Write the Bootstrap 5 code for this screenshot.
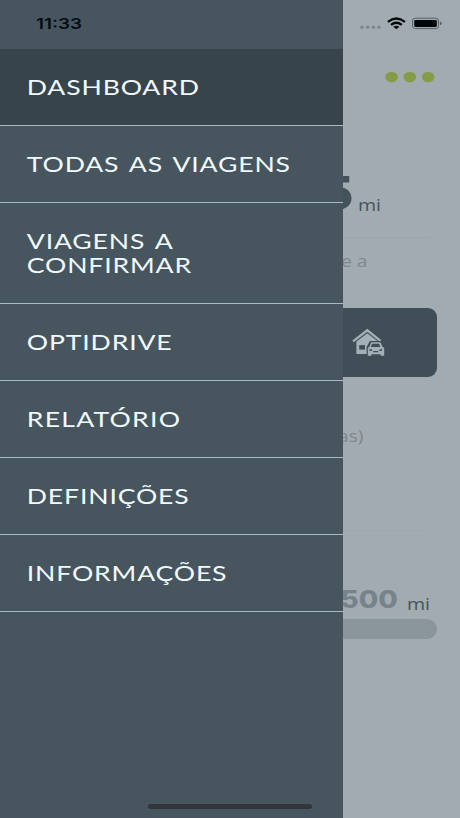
<!DOCTYPE html>
<html lang="pt">
<head>
<meta charset="utf-8">
<meta name="viewport" content="width=device-width, initial-scale=1">
<title>Dashboard</title>
<link rel="stylesheet" href="https://cdn.jsdelivr.net/npm/bootstrap@5.3.0/dist/css/bootstrap.min.css">
<style>
  body { background: #a2abb1; font-family: "Open Sans", sans-serif; color: #485359; }
  .phone { width: 460px; height: 818px; }
  .status { height: 49px; padding: 17px 18px 0 0; }
  .topbar { height: 59px; padding: 22px 25px 0 0; border-bottom: 1px solid #9fa8ae; }
  .hero { height: 130px; margin-right: 29px; padding-right: 50px; border-bottom: 1px solid #9da6ac; }
  .hero-num { font: 800 47px/46px "Inter", sans-serif; color: #44525b; margin-bottom: 21px; margin-right: 7px; transform: scaleX(1.14); transform-origin: right; }
  .unit { font-size: 17px; line-height: 24px; }
  .unit span { display: inline-block; transform: scaleX(1.15); transform-origin: right; }
  .hero .unit { margin-bottom: 20px; }
  .goal .unit { margin-bottom: 3px; }
  .note { font-size: 17px; line-height: 24px; color: #7e888e; }
  .note span { display: inline-block; transform: scaleX(1.12); transform-origin: right; }
  .period { height: 70px; padding: 11px 93px 0 0; }
  .tile { width: 410px; height: 69px; margin-right: 23px; border-radius: 9px; background: #404e57; padding: 19px 52px 0 0; }
  .group { height: 153px; padding: 47px 97px 0 0; }
  .rule { height: 1px; width: 402px; margin-right: 29px; background: #9fa8ae; }
  .goal { height: 88px; padding-right: 30px; }
  .goal-num { font: 800 24px/28px "Inter", sans-serif; color: #77838a; margin-bottom: 5px; margin-right: 12px; transform: scaleX(1.18); transform-origin: right; }
  .meter { width: 410px; height: 20px; margin-right: 23px; border-radius: 10px; background: #8b959c; }
  .drawer { width: 343px; background: #46555e; }
  .clock { height: 49px; padding: 14px 0 0 36px; font: 600 15px/19px "Inter", sans-serif; color: #050d14; }
  .clock span { display: inline-block; transform: scaleX(1.26); transform-origin: left; }
  .entry { min-height: 77px; padding: 26px 0 26px 27px; border-bottom: 1px solid #a9b9c3; color: #f1faff; font: 400 21px/24px "Lato", sans-serif; text-decoration: none; }
  .entry.current { background: #38444c; }
  .entry span { display: block; width: max-content; letter-spacing: .65px; word-spacing: 2.2px; transform: translateX(-.2px) scaleX(1.268); transform-origin: left; }
  .entry .loose { letter-spacing: .95px; }
  .home-bar { left: 148px; top: 804px; width: 164px; height: 5px; border-radius: 3px; background: #34353a; }
</style>
<script src="https://cdn.jsdelivr.net/npm/bootstrap@5.3.0/dist/js/bootstrap.bundle.min.js"></script>
</head>
<body>
<div class="phone position-relative overflow-hidden">
  <main class="d-flex flex-column align-items-end">
    <div class="status w-100 d-flex justify-content-end">
      <svg width="82" height="14" viewBox="0 0 82 14">
        <g fill="#7d868c"><circle cx="2" cy="10.3" r="1.7"/><circle cx="7.7" cy="10.3" r="1.7"/><circle cx="13.4" cy="10.3" r="1.7"/><circle cx="19" cy="10.3" r="1.7"/></g>
        <g fill="none" stroke="#030608" stroke-width="2.3"><path d="M27.9 4.9Q36.3-1.8 44.9 4.9"/><path d="M31 7.9Q36.3 3.6 41.8 7.9"/></g>
        <path d="M33.3 9.8q3-2.2 6.1 0l-3 2.5z" fill="#030608"/>
        <rect x="52.5" y="1.2" width="26" height="10.4" rx="2.8" fill="none" stroke="#596167"/>
        <rect x="54.2" y="2.9" width="22.6" height="7" rx="1.3" fill="#030608"/>
        <path d="M80 4.6q1.8.5 1.8 1.8T80 8.2z" fill="#596167"/>
      </svg>
    </div>
    <div class="topbar w-100 d-flex justify-content-end">
      <svg width="50" height="12" viewBox="0 0 50 12" fill="#859b45"><ellipse cx="6.6" cy="6" rx="6.3" ry="5.2"/><ellipse cx="24.8" cy="6" rx="6.3" ry="5.2"/><ellipse cx="43.2" cy="6" rx="6.3" ry="5.2"/></svg>
    </div>
    <div class="hero d-flex justify-content-end align-items-end">
      <div class="hero-num">5</div><div class="unit"><span>mi</span></div>
    </div>
    <div class="period note"><span>e a</span></div>
    <div class="tile d-flex justify-content-end">
      <svg width="33" height="29" viewBox="0 0 33 29">
        <path d="M1 14.3 15.3 3.3 28.5 13.8" fill="none" stroke="#a4b0b7" stroke-width="2.3"/>
        <path d="M4.4 14.5 15.3 6.3 26 14.5V18H17v9H4.4z" fill="#a4b0b7"/>
        <rect x="7.2" y="18.1" width="5.8" height="4.5" fill="#404e57"/>
        <path d="M14.6 29v-9l3.2-6h10.6l3.8 6v9z" fill="#404e57"/>
        <path fill-rule="evenodd" d="M19.2 15.2h8.4q1 0 1.4 1l1.3 3.4 1.9 1.5v7.7h-3.6v-1.6h-9.2v1.6h-3.6v-7.7l1.8-1.5 1.1-3.3q.3-1.1.5-1.1zM19.9 16.8l-1 3.1h9.4l-1.1-3.1zM17.5 21.8v1.9l3 .3q0-1.8-3-2.2zm12.5 0q-3 .4-3 2.2l3-.3zM21.2 24v1.3h5.1v-1.3z" fill="#a4b0b7"/>
      </svg>
    </div>
    <div class="group note"><span>(milhas)</span></div>
    <div class="rule"></div>
    <div class="goal d-flex justify-content-end align-items-end">
      <div class="goal-num">500</div><div class="unit"><span>mi</span></div>
    </div>
    <div class="meter"></div>
  </main>
  <nav class="drawer position-absolute top-0 start-0 h-100 d-flex flex-column">
    <div class="clock"><span>11:33</span></div>
    <a class="entry current" href="#"><span>DASHBOARD</span></a>
    <a class="entry" href="#"><span>TODAS AS VIAGENS</span></a>
    <a class="entry" href="#"><span>VIAGENS A</span><span>CONFIRMAR</span></a>
    <a class="entry" href="#"><span>OPTIDRIVE</span></a>
    <a class="entry" href="#"><span class="loose">RELATÓRIO</span></a>
    <a class="entry" href="#"><span>DEFINIÇÕES</span></a>
    <a class="entry" href="#"><span>INFORMAÇÕES</span></a>
  </nav>
  <div class="home-bar position-absolute"></div>
</div>
</body>
</html>
